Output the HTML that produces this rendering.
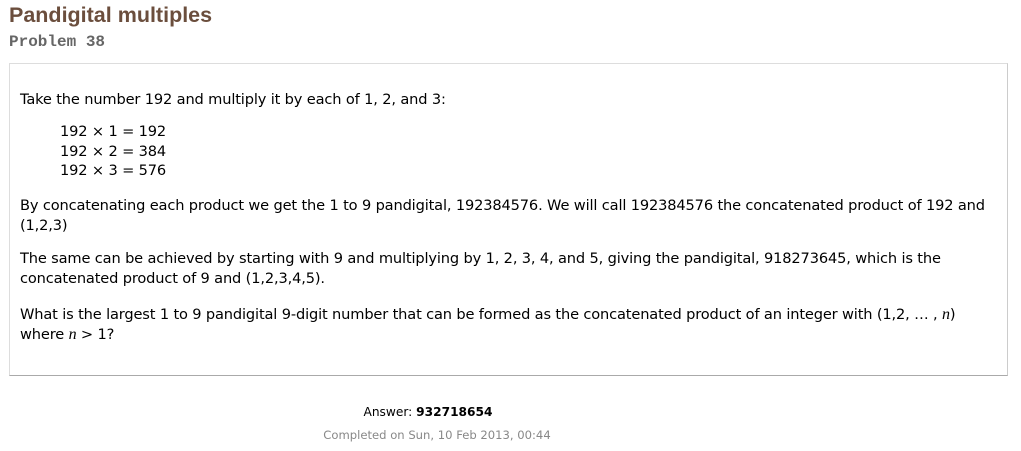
<!DOCTYPE html>
<html><head><style>
body{margin:0;background:#fff;width:1021px;height:451px;overflow:hidden;font-family:"DejaVu Sans","Liberation Sans",sans-serif;}
h2{position:absolute;left:9px;top:3px;margin:0;font:bold 21.5px "Liberation Sans",sans-serif;color:#6b4e3d;}
.pn{position:absolute;left:9px;top:33px;font:bold 16px "Liberation Mono",monospace;color:#666;}
.box{position:absolute;left:9px;top:63px;width:997px;height:311px;border:1px solid #ddd;border-bottom-color:#aaa;border-right-color:#ccc;}
.t{position:absolute;left:20px;font-size:14.6px;color:#000;line-height:19.5px;white-space:nowrap;letter-spacing:-0.15px}
i{font-family:"Liberation Serif",serif;font-size:16px}
.c{position:absolute;left:0;width:874px;text-align:center;font-family:"DejaVu Sans",sans-serif;font-size:11.6px}
</style></head><body>
<h2>Pandigital multiples</h2>
<div class="pn">Problem 38</div>
<div class="box"></div>
<div class="t" style="top:90px">Take the number 192 and multiply it by each of 1, 2, and 3:</div>
<div class="t" style="top:122px;left:60px">192 × 1 = 192<br>192 × 2 = 384<br>192 × 3 = 576</div>
<div class="t" style="top:196px">By concatenating each product we get the 1 to 9 pandigital, 192384576. We will call 192384576 the concatenated product of 192 and<br>(1,2,3)</div>
<div class="t" style="top:249px">The same can be achieved by starting with 9 and multiplying by 1, 2, 3, 4, and 5, giving the pandigital, 918273645, which is the<br>concatenated product of 9 and (1,2,3,4,5).</div>
<div class="t" style="top:305px">What is the largest 1 to 9 pandigital 9-digit number that can be formed as the concatenated product of an integer with (1,2, … , <i>n</i>)<br>where <i>n</i> &gt; 1?</div>
<div class="c" style="top:405px;color:#000;font-size:12.2px;width:856px">Answer: <b>932718654</b></div>
<div class="c" style="top:428px;color:#888">Completed on Sun, 10 Feb 2013, 00:44</div>
</body></html>
